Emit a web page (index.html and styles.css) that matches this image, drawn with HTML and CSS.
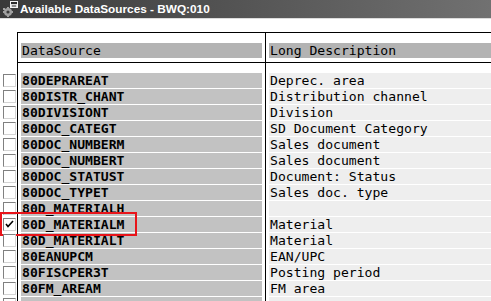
FILE: index.html
```html
<!DOCTYPE html>
<html>
<head>
<meta charset="utf-8">
<link rel="stylesheet" href="styles.css">
</head>
<body>
<div class="titlebar">
  <svg class="ticon" width="16" height="16" viewBox="0 0 16 16">
    <rect x="8.5" y="0.5" width="7" height="6" fill="#d8d8d8" stroke="#f4f4f4"/>
    <rect x="9" y="1" width="6" height="2" fill="#2a2a2a"/>
    <rect x="10" y="4" width="4" height="2" fill="#8a8a8a"/>
    <circle cx="6" cy="11" r="4" fill="#a0a0a0"/>
    <circle cx="6" cy="11" r="1.6" fill="#3a3a3a"/>
    <rect x="5" y="6" width="2" height="2" fill="#a0a0a0"/>
    <rect x="5" y="14" width="2" height="2" fill="#a0a0a0"/>
    <rect x="1" y="10" width="2" height="2" fill="#a0a0a0"/>
    <rect x="9" y="10" width="2" height="2" fill="#a0a0a0"/>
    <circle cx="2" cy="8" r="1" fill="#c8c8c8"/>
  </svg>
  <span class="ttext">Available DataSources - BWQ:010</span>
</div>
<div class="list">
  <div class="row head">
    <div class="c0"></div>
    <div class="c1"><div class="band">DataSource</div></div>
    <div class="c2"><div class="band">Long Description</div></div>
  </div>
  <div class="row spacer">
    <div class="c0"></div><div class="c1"></div><div class="c2"></div>
  </div>
  <div class="row"><div class="c0"><span class="cb"></span></div><div class="c1"><div class="band">80DEPRAREAT</div></div><div class="c2"><div class="band">Deprec. area</div></div></div>
  <div class="row"><div class="c0"><span class="cb"></span></div><div class="c1"><div class="band">80DISTR_CHANT</div></div><div class="c2"><div class="band">Distribution channel</div></div></div>
  <div class="row"><div class="c0"><span class="cb"></span></div><div class="c1"><div class="band">80DIVISIONT</div></div><div class="c2"><div class="band">Division</div></div></div>
  <div class="row"><div class="c0"><span class="cb"></span></div><div class="c1"><div class="band">80DOC_CATEGT</div></div><div class="c2"><div class="band">SD Document Category</div></div></div>
  <div class="row"><div class="c0"><span class="cb"></span></div><div class="c1"><div class="band">80DOC_NUMBERM</div></div><div class="c2"><div class="band">Sales document</div></div></div>
  <div class="row"><div class="c0"><span class="cb"></span></div><div class="c1"><div class="band">80DOC_NUMBERT</div></div><div class="c2"><div class="band">Sales document</div></div></div>
  <div class="row"><div class="c0"><span class="cb"></span></div><div class="c1"><div class="band">80DOC_STATUST</div></div><div class="c2"><div class="band">Document: Status</div></div></div>
  <div class="row"><div class="c0"><span class="cb"></span></div><div class="c1"><div class="band">80DOC_TYPET</div></div><div class="c2"><div class="band">Sales doc. type</div></div></div>
  <div class="row"><div class="c0"><span class="cb"></span></div><div class="c1"><div class="band">80D_MATERIALH</div></div><div class="c2"><div class="band"></div></div></div>
  <div class="row sel"><div class="c0"><span class="cb on"><svg width="9" height="9" viewBox="0 0 9 9"><path d="M1 4 L3 6.5 L8 1" fill="none" stroke="#000" stroke-width="1.6"/></svg></span></div><div class="c1"><div class="band">80D_MATERIALM</div></div><div class="c2"><div class="band">Material</div></div></div>
  <div class="row"><div class="c0"><span class="cb"></span></div><div class="c1"><div class="band">80D_MATERIALT</div></div><div class="c2"><div class="band">Material</div></div></div>
  <div class="row"><div class="c0"><span class="cb"></span></div><div class="c1"><div class="band">80EANUPCM</div></div><div class="c2"><div class="band">EAN/UPC</div></div></div>
  <div class="row"><div class="c0"><span class="cb"></span></div><div class="c1"><div class="band">80FISCPER3T</div></div><div class="c2"><div class="band">Posting period</div></div></div>
  <div class="row"><div class="c0"><span class="cb"></span></div><div class="c1"><div class="band">80FM_AREAM</div></div><div class="c2"><div class="band">FM area</div></div></div>
  <div class="row"><div class="c0"><span class="cb"></span></div><div class="c1"><div class="band"></div></div><div class="c2"><div class="band"></div></div></div>
</div>
</body>
</html>
```

FILE: styles.css
```css
html, body {
  margin: 0;
  padding: 0;
  background: #ffffff;
  width: 491px;
  height: 301px;
  overflow: hidden;
}

.titlebar {
  height: 18px;
  border-bottom: 1px solid #dcdcdc;
  background: linear-gradient(to right, #3a3a3a 0%, #555555 50%, #717171 100%);
  display: flex;
  align-items: center;
  box-sizing: content-box;
}

.ticon {
  margin-left: 2px;
  margin-right: 2px;
  flex: none;
}

.ttext {
  font-family: "Liberation Sans", Arial, sans-serif;
  font-weight: bold;
  font-size: 11.8px;
  color: #ffffff;
  line-height: 18px;
}

.list {
  margin-top: 13px;
  font-family: "DejaVu Sans Mono", "Liberation Mono", monospace;
  font-size: 13.1px;
  color: #000;
}

.row {
  display: flex;
  height: 16px;
}

.c0 {
  width: 17px;
  flex: none;
}

.c1 {
  width: 241px;
  flex: none;
  border-left: 1px solid #000;
  padding: 0 3px 1px 3px;
  box-sizing: content-box;
}

.c2 {
  flex: 1;
  border-left: 1px solid #000;
  padding: 0 0 1px 3px;
}

.band {
  height: 15px;
  line-height: 15px;
  padding-left: 1px;
  white-space: nowrap;
  overflow: hidden;
}

.c1 .band {
  background: #c2c2c2;
  font-weight: bold;
}

.c2 .band {
  background: #eeeeee;
}

.row.head {
  height: 31px;
}

.row.head .c1,
.row.head .c2 {
  border-top: 1px solid #000;
  border-bottom: 1px solid #000;
  padding-top: 10px;
  padding-bottom: 6px;
}

.row.head .band {
  background: #b3b3b3;
  font-weight: normal;
}

.row.spacer {
  height: 10px;
}

.row.spacer .c1,
.row.spacer .c2 {
  padding: 0;
}

.row.spacer .c1 {
  width: 247px;
}

.cb {
  display: block;
  width: 13px;
  height: 13px;
  margin: 1px 0 0 3px;
  box-sizing: border-box;
  background: #ffffff;
  border-top: 1px solid #808080;
  border-left: 1px solid #808080;
  border-right: 1px solid #d4d4d4;
  border-bottom: 1px solid #d4d4d4;
  position: relative;
}

.cb svg {
  position: absolute;
  left: 1px;
  top: 1px;
}

.row.sel {
  position: relative;
}

.row.sel::after {
  content: "";
  position: absolute;
  left: 0;
  top: -5px;
  width: 137px;
  height: 24px;
  border: 2px solid #e8141a;
  box-sizing: border-box;
  pointer-events: none;
}
```
